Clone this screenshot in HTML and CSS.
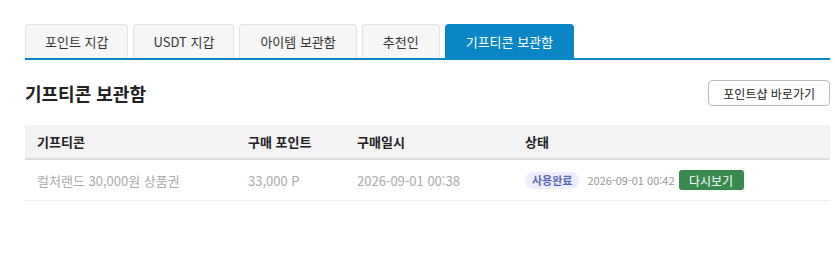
FILE: index.html
```html
<!DOCTYPE html>
<html lang="ko">

<head>
    <meta charset="UTF-8">
    <meta name="viewport" content="width=device-width, initial-scale=1.0">
    <title>기프티콘 보관함</title>
    <link rel="stylesheet" href="styles.css">
</head>

<body>
    <div class="contenedor">
        <!-- Pestañas -->
        <ul class="pestanas">
            <li class="pestana">포인트 지갑</li>
            <li class="pestana">USDT 지갑</li>
            <li class="pestana ancha">아이템 보관함</li>
            <li class="pestana ancha">추천인</li>
            <li class="pestana activa">기프티콘 보관함</li>
        </ul>

        <div class="cabecera">
            <h2 class="titulo">기프티콘 보관함</h2>
            <button class="boton-tienda" type="button">포인트샵 바로가기</button>
        </div>

        <table class="tabla">
            <thead>
                <tr>
                    <th class="col-nombre">기프티콘</th>
                    <th class="col-puntos">구매 포인트</th>
                    <th class="col-fecha">구매일시</th>
                    <th>상태</th>
                </tr>
            </thead>
            <tbody>
                <tr>
                    <td>컬처랜드 30,000원 상품권</td>
                    <td>33,000 P</td>
                    <td>2026-09-01 00:38</td>
                    <td>
                        <div class="estado">
                            <span class="etiqueta">사용완료</span>
                            <span class="fecha-uso">2026-09-01 00:42</span>
                            <button class="boton-ver" type="button">다시보기</button>
                        </div>
                    </td>
                </tr>
            </tbody>
        </table>
    </div>
</body>

</html>
```

FILE: styles.css
```css
body {
    margin: 0;
    font-family: "Noto Sans CJK KR", "Noto Sans", sans-serif;
    color: #222;
    background: #fff;
}

.contenedor {
    padding: 24px 5px 0 25px;
}


.pestanas {
    display: flex;
    gap: 5px;
    list-style: none;
    margin: 0;
    padding: 0;
    border-bottom: 2px solid #0a86c6;
}

.pestana {
    height: 33px;
    line-height: 33px;
    padding: 0 19px;
    font-size: 13px;
    color: #333;
    background-color: #f6f6f6;
    border: 1px solid #e2e2e2;
    border-bottom: none;
    border-radius: 4px 4px 0 0;
}

.pestana.ancha {
    padding: 0 20px;
}

.pestana.activa {
    padding: 0 20px;
    background-color: #0a86c6;
    border-color: #0a86c6;
    color: #fff;
}


.cabecera {
    display: flex;
    justify-content: space-between;
    align-items: center;
    margin-top: 20px;
}

.titulo {
    margin: 0;
    font-size: 18px;
    font-weight: bold;
    color: #222;
}

.boton-tienda {
    font-family: inherit;
    font-size: 12px;
    color: #222;
    background: #fff;
    border: 1px solid #bbb;
    border-radius: 4px;
    height: 26px;
    padding: 0 14px;
}


.tabla {
    width: 100%;
    margin-top: 19px;
    border-collapse: collapse;
    font-size: 13px;
}

.tabla th {
    height: 33px;
    padding: 0 12px;
    text-align: left;
    font-weight: bold;
    background-color: #f3f3f3;
    border-bottom: 2px solid #dcdcdc;
    color: #222;
}

.tabla td {
    height: 40px;
    padding: 0 12px;
    color: #aaa;
    border-bottom: 1px solid #eee;
}

.col-nombre {
    width: 187px;
}

.col-puntos {
    width: 85px;
}

.col-fecha {
    width: 144px;
}

.estado {
    display: flex;
    align-items: center;
}

.etiqueta {
    background-color: #eceffb;
    color: #5b68b0;
    font-size: 11px;
    font-weight: bold;
    padding: 0 7px;
    line-height: 17px;
    border-radius: 9px;
}

.fecha-uso {
    font-size: 11px;
    color: #999;
    margin-left: 8px;
}

.boton-ver {
    font-family: inherit;
    font-size: 12px;
    color: #fff;
    background-color: #3a8a4f;
    border: none;
    border-radius: 3px;
    height: 20px;
    width: 65px;
    margin-left: 4px;
}
```
